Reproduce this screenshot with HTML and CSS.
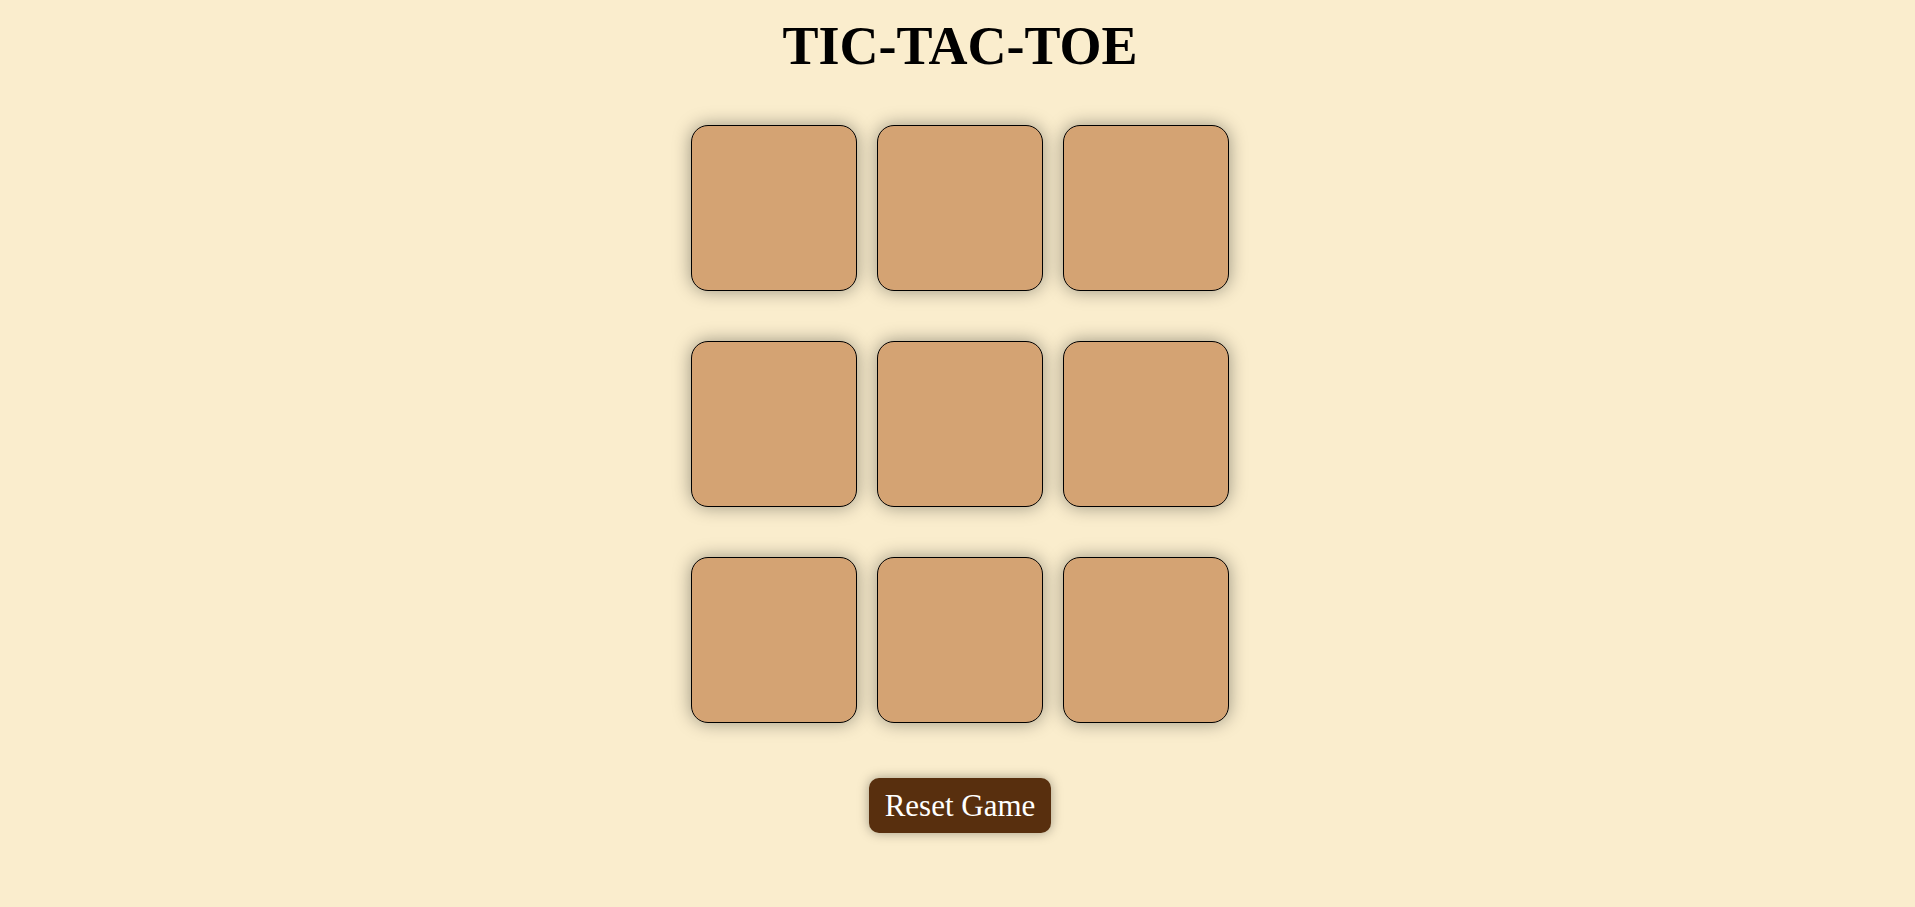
FILE: index.html
```html
<!DOCTYPE html>
<html lang="en">
<head>
<meta charset="UTF-8">
<title>Tic-Tac-Toe</title>
<link rel="stylesheet" href="styles.css">
</head>
<body>
<main class="game">
  <h1 class="title">TIC-TAC-TOE</h1>
  <div class="board">
    <button class="box"></button>
    <button class="box"></button>
    <button class="box"></button>
    <button class="box"></button>
    <button class="box"></button>
    <button class="box"></button>
    <button class="box"></button>
    <button class="box"></button>
    <button class="box"></button>
  </div>
  <button class="reset">Reset Game</button>
</main>
</body>
</html>
```

FILE: styles.css
```css
html, body {
  margin: 0;
  padding: 0;
}
body {
  background: #faedcd;
  font-family: "Liberation Serif", "Times New Roman", serif;
  min-height: 100vh;
}
.game {
  display: flex;
  flex-direction: column;
  align-items: center;
  padding-left: 5px;
}
.title {
  font-size: 54px;
  font-weight: bold;
  margin: 15px 0 48px 0;
  line-height: 62px;
  color: #000;
}
.board {
  display: grid;
  grid-template-columns: repeat(3, 166px);
  grid-auto-rows: 166px;
  column-gap: 20px;
  row-gap: 50px;
}
.box {
  width: 166px;
  height: 166px;
  box-sizing: border-box;
  background: #d4a373;
  border: 1px solid #000;
  border-radius: 17px;
  box-shadow: 0 0 18px rgba(0, 0, 0, 0.38);
  padding: 0;
}
.reset {
  margin-top: 55px;
  background: #582f0e;
  color: #fff;
  font-family: "Liberation Serif", "Times New Roman", serif;
  font-size: 31px;
  line-height: 35px;
  padding: 10px 16px;
  border: none;
  border-radius: 10px;
  box-shadow: 0 0 12px rgba(0, 0, 0, 0.35);
}
```
